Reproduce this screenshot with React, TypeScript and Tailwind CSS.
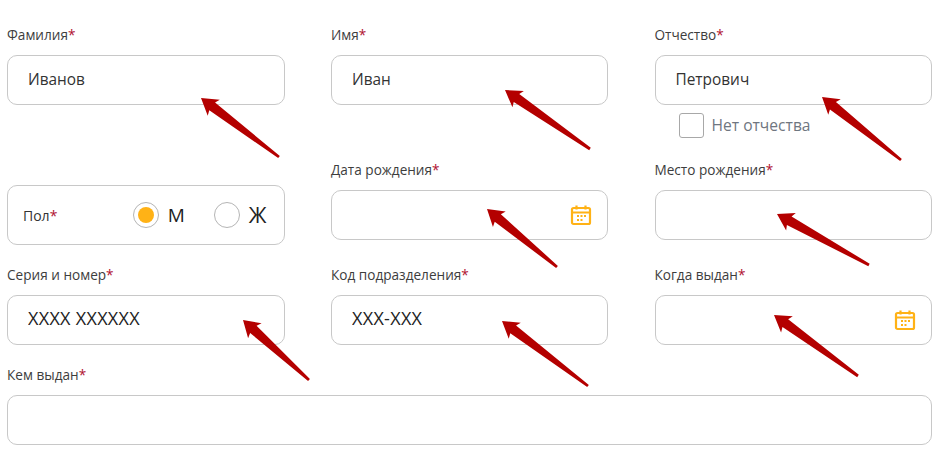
import type { ReactNode } from 'react';

const arrows = [
  { tip: [201, 98], tail: [279, 157] },
  { tip: [505, 90], tail: [590, 149] },
  { tip: [822, 97], tail: [901, 160] },
  { tip: [487, 209], tail: [557, 267] },
  { tip: [777, 214], tail: [869, 265] },
  { tip: [243, 320], tail: [309, 380] },
  { tip: [502, 321], tail: [588, 386] },
  { tip: [774, 315], tail: [858, 376] },
];

// annotation arrow, tapered shaft with a slightly swept head
function arrowPoints(tip: number[], tail: number[]) {
  const dx = tail[0] - tip[0];
  const dy = tail[1] - tip[1];
  const len = Math.hypot(dx, dy);
  const ux = dx / len;
  const uy = dy / len;
  const at = (along: number, side: number) =>
    `${tip[0] + ux * along - uy * side},${tip[1] + uy * along + ux * side}`;
  return [
    at(0, 0),
    at(16, 10),
    at(14, 4.8),
    at(len, 1.4),
    at(len, -1.4),
    at(14, -4.8),
    at(16, -10),
  ].join(' ');
}

function CalendarIcon() {
  return (
    <svg width="22" height="22" viewBox="0 0 22 22" fill="none" stroke="#ffb216" strokeWidth="2.2">
      <rect x="2" y="4" width="18" height="16" rx="1.5" />
      <path d="M2 8.5h18M6.5 1.5v4M15.5 1.5v4" />
      <g fill="#ffb216" stroke="none">
        <rect x="7" y="11" width="2" height="2" />
        <rect x="10.5" y="11" width="2" height="2" />
        <rect x="14" y="11" width="2" height="2" />
        <rect x="7" y="15" width="2" height="2" />
        <rect x="10.5" y="15" width="2" height="2" />
      </g>
    </svg>
  );
}

function Label({ children }: { children: ReactNode }) {
  return (
    <label className="mb-2.5 block h-5 text-[13.6px] leading-5 text-[#3d3d3d]">
      {children}
      <span className="text-[#b01030]">*</span>
    </label>
  );
}

function Field({ label, value, icon, wide }: { label: string; value?: string; icon?: boolean; wide?: boolean }) {
  return (
    <div>
      <Label>{label}</Label>
      <div className="flex h-[50px] items-center rounded-[10px] border border-[#c8c8c8] bg-white pr-[15px] pl-5">
        <input
          readOnly
          value={value ?? ''}
          className={
            wide
              ? 'w-full min-w-0 pb-[3px] text-[18px] font-medium tracking-[0.3px] text-[#222222] outline-none'
              : 'w-full min-w-0 text-[15.4px] text-[#333333] outline-none'
          }
        />
        {icon && (
          <span className="shrink-0">
            <CalendarIcon />
          </span>
        )}
      </div>
    </div>
  );
}

function Radio({ label, checked, large }: { label: string; checked?: boolean; large?: boolean }) {
  return (
    <div className="flex items-center gap-[9px]">
      <span className="flex h-[26px] w-[26px] items-center justify-center rounded-full border border-[#b5b5b5]">
        {checked && <span className="h-4 w-4 rounded-full bg-[#ffb216]" />}
      </span>
      <span className={large ? 'text-[21px] leading-none text-[#222222]' : 'text-[19px] leading-none text-[#222222]'}>
        {label}
      </span>
    </div>
  );
}

export default function App() {
  return (
    <div className="relative h-[471px] w-[945px] overflow-hidden bg-white font-['Open_Sans',sans-serif]">
      <div className="pt-[25px] pl-[7px]">
        <div className="grid grid-cols-[277.5px_277px_277.5px] gap-x-[46.5px] gap-y-5">
          <Field label="Фамилия" value="Иванов" />
          <Field label="Имя" value="Иван" />
          <div>
            <Field label="Отчество" value="Петрович" />
            <div className="mt-2 mb-0.5 ml-6 flex items-center gap-2">
              <span className="h-[25px] w-[25px] rounded-[3px] border border-[#a8a8a8]" />
              <span className="text-[15.6px] leading-[25px] text-[#6f7680]">Нет отчества</span>
            </div>
          </div>

          <div className="mt-[25px] flex h-[60px] items-center justify-between rounded-[10px] border border-[#c8c8c8] pr-[17px] pl-[15px]">
            <span className="text-[14px] text-[#333333]">
              Пол<span className="text-[#b01030]">*</span>
            </span>
            <div className="flex items-center gap-[29px]">
              <Radio label="М" checked />
              <Radio label="Ж" large />
            </div>
          </div>
          <Field label="Дата рождения" icon />
          <Field label="Место рождения" />

          <Field label="Серия и номер" value="XXXX XXXXXX" wide />
          <Field label="Код подразделения" value="XXX-XXX" wide />
          <Field label="Когда выдан" icon />

          <div className="col-span-3">
            <Field label="Кем выдан" />
          </div>
        </div>
      </div>

      <svg className="pointer-events-none absolute inset-0" width="945" height="471">
        {arrows.map((a, i) => (
          <polygon key={i} points={arrowPoints(a.tip, a.tail)} fill="#b40000" />
        ))}
      </svg>
    </div>
  );
}
